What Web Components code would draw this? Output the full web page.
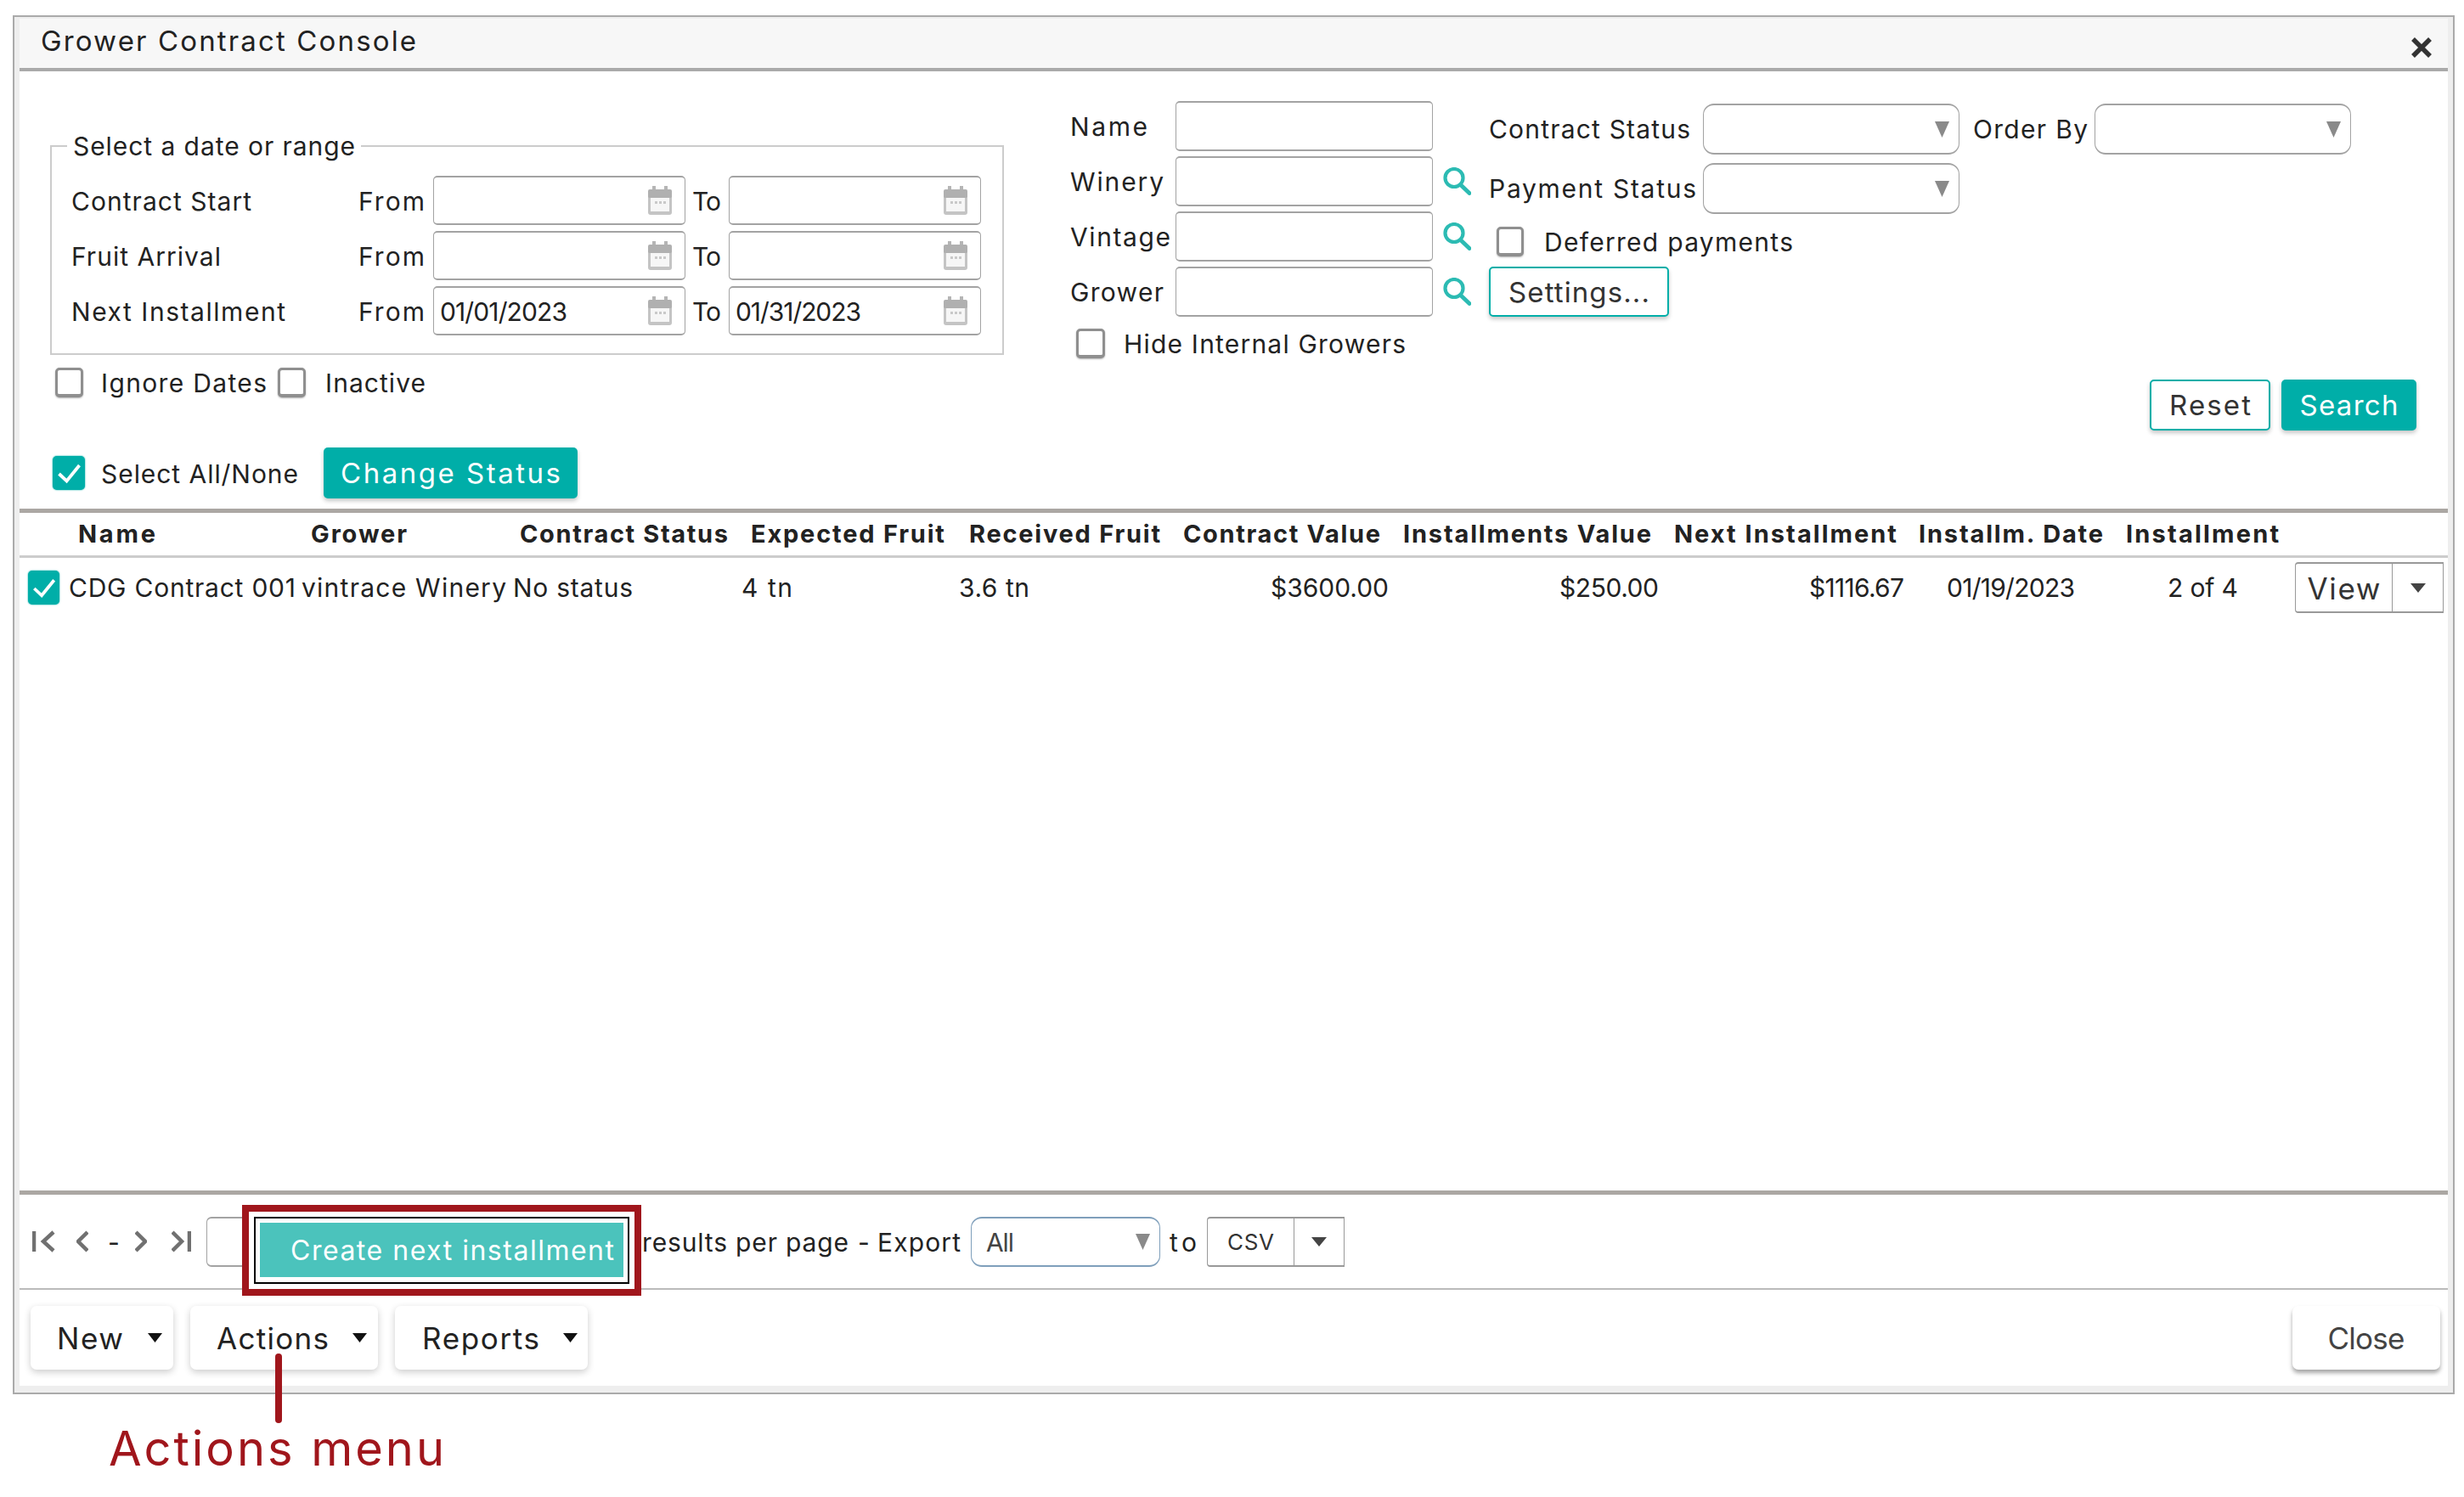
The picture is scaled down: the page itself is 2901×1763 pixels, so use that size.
<!DOCTYPE html>
<html lang="en"><head><meta charset="utf-8"><title>Grower Contract Console</title>
<style>
html,body{margin:0;background:#fff}
body{position:relative;width:2901px;height:1763px;overflow:hidden;padding:18px 0 0 15px;box-sizing:border-box;font:30px/1.2 Inter,"Liberation Sans",sans-serif;color:#222}
</style></head><body>
<gc-window></gc-window>
<gc-callout></gc-callout>
<script>
const T=(w,s,extra='')=>`<gc-t w="${w}" ${extra}>${s}</gc-t>`;
const ARROW=(w,h,c)=>`<svg width="${w}" height="${h}" viewBox="0 0 ${w} ${h}" style="display:block;flex:none"><path d="M0 0H${w}L${w/2} ${h}Z" fill="${c}"/></svg>`;

class GcBase extends HTMLElement{
  constructor(){super();this.attachShadow({mode:'open'});}
  connectedCallback(){if(!this.done){this.done=1;this.shadowRoot.innerHTML=`<style>${this.css()}</style>${this.html()}`;}}
  css(){return':host{display:block}'}
  html(){return'<slot></slot>'}
  a(n,d){return this.hasAttribute(n)?this.getAttribute(n):d}
}
/* text whose run is fitted to the width of the original font */
class GcT extends HTMLElement{
  constructor(){super();this.attachShadow({mode:'open'}).innerHTML='<style>:host{display:inline-block;white-space:nowrap;flex:none;padding-top:1.5px}</style><slot></slot>';}
  connectedCallback(){
    const w=+this.getAttribute('w');if(!w)return;
    const len=this.textContent.length;
    if(len<2){this.style.width=w+'px';this.style.textAlign='center';return;}
    this.style.letterSpacing='0px';
    const cur=this.getBoundingClientRect().width;
    const ls=(w-cur)/(len-1);
    this.style.letterSpacing=ls+'px';
    this.style.marginRight=(-ls)+'px';
  }
}
customElements.define('gc-t',GcT);

customElements.define('gc-date',class extends GcBase{
  css(){return`:host{display:flex;align-items:center;box-sizing:border-box;width:297px;height:58px;border:solid #a3a3a3;border-width:2px 1.5px;border-radius:5px;padding:0 14px 0 7px;background:#fff;justify-content:space-between}`}
  html(){return`<span>${this.a('value')?T(this.a('w'),this.a('value')):''}</span>
  <svg width="30" height="36" viewBox="0 0 30 36"><path d="M6 1h4v5H6zM20 1h4v5h-4z" fill="#b5b5b5"/><rect x="1" y="5" width="28" height="11" rx="2" fill="#b0b0b0"/><path d="M1 15h28v17a3 3 0 0 1-3 3H4a3 3 0 0 1-3-3z" fill="#c4c4c4"/><rect x="4" y="15" width="22" height="16" fill="#f6f6f6"/><path d="M9 19h3v3H9zM14 19h3v3h-3zM19 19h3v3h-3z" fill="#c9c9c9"/></svg>`}
});
customElements.define('gc-input',class extends GcBase{
  css(){return`:host{display:block;box-sizing:border-box;width:303px;height:59px;border:solid #a3a3a3;border-width:2px 1.5px;border-radius:5px;background:#fff}`}
  html(){return''}
});
customElements.define('gc-glass',class extends GcBase{
  css(){return':host{display:block;width:33px;height:33px}'}
  html(){return`<svg width="33" height="33" viewBox="0 0 33 33" style="display:block"><circle cx="13" cy="12.500" r="10.500" fill="none" stroke="#2cbbb3" stroke-width="4.200"/><path d="M20.500 20.500L31 30.500" stroke="#2cbbb3" stroke-width="4.800" stroke-linecap="round"/></svg>`}
});
customElements.define('gc-check',class extends GcBase{
  css(){const c=this.hasAttribute('checked');return`:host{display:block;flex:none;box-sizing:border-box;width:${this.a('bw',33)}px;height:${this.a('bh',35)}px;border-radius:5px;${c?'background:#00aea8;box-shadow:0 0 2px #00aea8':'border:3.5px solid #8f8f8f;border-bottom-width:4.5px;background:#fff;box-shadow:0 1px 2px rgba(0,0,0,.3)'}}`}
  html(){return this.hasAttribute('checked')?`<svg width="100%" height="100%" viewBox="0 0 38 40" style="display:block"><path d="M7.500 21l9 8.500L31.500 11" fill="none" stroke="#fff" stroke-width="3.800"/></svg>`:''}
});
customElements.define('gc-select',class extends GcBase{
  css(){return`:host{display:flex;align-items:center;justify-content:space-between;box-sizing:border-box;width:${this.a('width',302)}px;height:${this.a('height',60)}px;border:solid ${this.a('color','#a3a3a3')};border-width:2.500px 1.500px;border-radius:13px;padding:0 11px 0 17px;background:#fff;color:#444}`}
  html(){return`<span><slot></slot></span>${ARROW(17,19,'#8a8a8a')}`}
});
customElements.define('gc-btn',class extends GcBase{
  css(){const s=this.hasAttribute('solid');return`:host{display:flex;align-items:center;justify-content:center;flex:none;box-sizing:border-box;height:${this.a('height',60)}px;width:${this.a('width')}px;border-radius:5px;font-size:33px;box-shadow:0 3px 5px rgba(0,0,0,.22);${s?'background:#00aea8;color:#fff':'background:#fff;border:2.500px solid #00aea8;color:#333'}}`}
});
customElements.define('gc-split',class extends GcBase{
  css(){return`:host{display:flex;flex:none;box-sizing:border-box;width:${this.a('width')}px;height:${this.a('height',60)}px;border:solid #999;border-width:2.500px 1.500px;border-radius:4px 0 0 4px;background:#fff}
  .l{display:flex;align-items:center;justify-content:center;width:${this.a('lw')}px;border-right:1.500px solid #999;margin:0;box-sizing:border-box;font-size:${this.a('fs',35)}px;color:#333}
  .r{flex:1;display:flex;align-items:center;justify-content:center}`}
  html(){return`<div class="l"><slot></slot></div><div class="r">${ARROW(18,11,'#444')}</div>`}
});
customElements.define('gc-menu',class extends GcBase{
  css(){return`:host{display:flex;align-items:center;flex:none;box-sizing:border-box;height:75px;width:${this.a('width')}px;padding-left:${this.a('pl',31)}px;border-radius:7px;background:#fff;box-shadow:0 3px 9px rgba(0,0,0,.2);font-size:35px}
  svg{margin-left:${this.a('gap',29)}px}`}
  html(){return`<slot></slot>${ARROW(17,11,'#111')}`}
});

customElements.define('gc-date-panel',class extends GcBase{
  css(){return`:host{display:block;flex:none;width:1123px;box-sizing:border-box;margin-left:36px;padding-top:68px}
  fieldset{margin:0;padding:15px 24px 21px 23px;border:2.500px solid #ccc;box-sizing:border-box;width:1123px;min-width:0}
  legend{margin-left:-5px;padding:0 7px;line-height:37px;height:40px}
  .rows{display:grid;grid-template-columns:338px 88px 297px 51px 297px;row-gap:7px;align-items:center}
  .to{padding-left:8px}
  .chk{display:flex;align-items:center;height:35px;margin:15px 0 0 6px}`}
  html(){
    const row=(n,w,a,aw,b,bw)=>`<div>${T(w,n)}</div><div>${T(78,'From')}</div><gc-date value="${a}" w="${aw}"></gc-date><div class="to">${T(34,'To')}</div><gc-date value="${b}" w="${bw}"></gc-date>`;
    return`<fieldset><legend>${T(332,'Select a date or range')}</legend><div class="rows">
    ${row('Contract Start',212,'',0,'',0)}${row('Fruit Arrival',176,'',0,'',0)}${row('Next Installment',252,'01/01/2023',150,'01/31/2023',148)}
    </div></fieldset>
    <div class="chk"><gc-check></gc-check><span style="margin-left:21px">${T(195,'Ignore Dates')}</span><gc-check style="margin-left:13px"></gc-check><span style="margin-left:23px">${T(118,'Inactive')}</span></div>`}
});
customElements.define('gc-name-panel',class extends GcBase{
  css(){return`:host{display:block;flex:none;margin-left:78px;width:472px;padding-top:35px}
  .rows{display:grid;grid-template-columns:124px 303px 45px;row-gap:6px;align-items:center}
  gc-glass{margin-left:12px}
  .hide{display:flex;align-items:center;height:35px;margin:14px 0 0 7px}`}
  html(){const r=(n,w,g)=>`<div>${T(w,n)}</div><gc-input></gc-input>${g?'<gc-glass></gc-glass>':'<span></span>'}`;
  return`<div class="rows">${r('Name',91,0)}${r('Winery',110,1)}${r('Vintage',118,1)}${r('Grower',110,1)}</div>
  <div class="hide"><gc-check bw="34"></gc-check><span style="margin-left:22px">${T(332,'Hide Internal Growers')}</span></div>`}
});
customElements.define('gc-filter-panel',class extends GcBase{
  css(){return`:host{display:block;flex:none;margin-left:21px;width:1092px;padding-top:38px}
  .row{display:flex;align-items:center}
  .l{width:252px;flex:none;padding-bottom:2px}
  .o{width:143px;flex:none;margin-left:16px;padding-bottom:2px}
  .def{height:35px;margin:15px 0 0 9px}
  .act{display:flex;justify-content:flex-end;gap:13px;margin-top:74px}`}
  html(){return`<div class="row"><div class="l">${T(237,'Contract Status')}</div><gc-select></gc-select><div class="o">${T(135,'Order By')}</div><gc-select></gc-select></div>
  <div class="row" style="margin-top:10px"><div class="l">${T(244,'Payment Status')}</div><gc-select></gc-select></div>
  <div class="row def"><gc-check bw="32"></gc-check><span style="margin-left:24px">${T(293,'Deferred payments')}</span></div>
  <gc-btn width="212" height="59" style="margin-top:12px;padding-top:2px">${T(166,'Settings...')}</gc-btn>
  <div class="act"><gc-btn width="142">${T(96,'Reset')}</gc-btn><gc-btn solid width="159">${T(116,'Search')}</gc-btn></div>`}
});
customElements.define('gc-grid',class extends GcBase{
  css(){return`:host{display:block;flex:none;border-top:5px solid #aba7a3}
  .g{display:grid;grid-template-columns:329px 248px 270px 257px 253px 260px 318px 289px 243px 205px 1fr}
  .h{height:50px;align-items:center;font-weight:700;border-bottom:3px solid #ccc;font-size:29px}
  .b{height:70px;align-items:center}
  .b>.t{padding-bottom:2px}
  .r{text-align:right;padding-right:5px}
  .n{display:flex;align-items:center;padding-left:10px}`}
  html(){
    const hs=[[91,'Name',69],[113,'Grower',14],[245,'Contract Status',12],[228,'Expected Fruit',14],[225,'Received Fruit',14],[232,'Contract Value',13],[292,'Installments Value',12],[262,'Next Installment',13],[217,'Installm. Date',12],[180,'Installment',13]];
    return`<div class="g h">${hs.map(h=>`<div style="padding-left:${h[2]}px">${T(h[0],h[1])}</div>`).join('')}<div></div></div>
    <div class="g b">
      <div class="n"><gc-check checked bw="37" bh="40"></gc-check><span style="margin-left:11px;padding-bottom:2px;display:block">${T(267,'CDG Contract 001')}</span></div>
      <div class="t" style="padding-left:3px">${T(241,'vintrace Winery')}</div>
      <div class="t" style="padding-left:4px">${T(141,'No status')}</div>
      <div class="t" style="padding-left:3px">${T(60,'4 tn')}</div>
      <div class="t" style="padding-left:2px">${T(83,'3.6 tn')}</div>
      <div class="t r">${T(139,'$3600.00')}</div>
      <div class="t r">${T(117,'$250.00')}</div>
      <div class="t r">${T(112,'$1116.67')}</div>
      <div class="t" style="padding-left:45px">${T(151,'01/19/2023')}</div>
      <div class="t" style="padding-left:62px">${T(83,'2 of 4')}</div>
      <div style="padding-left:7px"><gc-split width="175" lw="114">${T(86,'View')}</gc-split></div>
    </div>`}
});
customElements.define('gc-pager',class extends GcBase{
  css(){return`:host{display:flex;flex:none;align-items:center;height:110px;border-top:5px solid #aba7a3;padding-left:15px}
  svg{display:block;flex:none}
  path{fill:none;stroke:#707070;stroke-width:4.500}
  .page{margin-left:18px;width:500px;height:59px;box-sizing:border-box;border:solid #a3a3a3;border-width:2px 1.500px;border-radius:6px;flex:none}`}
  html(){return`
  <svg width="27" height="26" viewBox="0 0 27 26"><path d="M2 1v24M25 2L13 13l12 11"/></svg>
  <svg width="14" height="26" viewBox="0 0 14 26" style="margin-left:25px"><path d="M13 2L2 13l11 11"/></svg>
  <span style="margin-left:23px">${T(9,'-')}</span>
  <svg width="14" height="26" viewBox="0 0 14 26" style="margin-left:23px"><path d="M1 2l11 11L1 24"/></svg>
  <svg width="23" height="26" viewBox="0 0 23 26" style="margin-left:29px"><path d="M1 2l11 11L1 24M21 1v24"/></svg>
  <div class="page"></div>
  <span style="margin-left:13px">${T(243,'results per page')}</span>
  <span style="margin-left:11px">${T(9,'-')}</span>
  <span style="margin-left:14px">${T(98,'Export')}</span>
  <gc-select width="223" height="59" color="#7f9fbb" style="margin-left:12px">${T(33,'All')}</gc-select>
  <span style="margin-left:11px">${T(32,'to')}</span>
  <gc-split width="162" lw="102" height="59" fs="26" style="margin-left:12px">${T(55,'CSV')}</gc-split>`}
});
customElements.define('gc-footer',class extends GcBase{
  css(){return`:host{display:flex;gap:20px;border-top:2px solid #bbb;padding:19px 9px 0 13px;flex:none;height:115px;box-sizing:border-box}
  .close{margin-left:auto;box-sizing:border-box;width:174px;height:75px;display:flex;align-items:center;justify-content:center;border-radius:7px;background:#fff;color:#444;font-size:35px;box-shadow:0 4px 5px rgba(0,0,0,.35)}`}
  html(){return`<gc-menu width="168">${T(78,'New')}</gc-menu><gc-menu width="221" gap="28">${T(132,'Actions')}</gc-menu><gc-menu width="227" pl="32" gap="28">${T(138,'Reports')}</gc-menu><div class="close">${T(91,'Close')}</div>`}
});
customElements.define('gc-window',class extends GcBase{
  css(){return`:host{display:flex;flex-direction:column;box-sizing:border-box;width:2875px;height:1624px;border:2px solid #aaa;padding:2px 6px 8px;background:#eee}
  .title{display:flex;justify-content:space-between;box-sizing:border-box;height:62px;padding:0 18px 5px 25px;background:#f7f7f7;border-bottom:4px solid #aaa;font-size:33px;align-items:center;flex:none}
  .title svg{display:block;margin-top:15px}
  .main{flex:1;display:flex;flex-direction:column;background:#fff;min-height:0}
  .form{display:flex;align-items:flex-start;margin-bottom:20px;flex:none}
  .sel{display:flex;align-items:center;height:60px;padding-left:39px;margin-bottom:12px;flex:none}
  .sp{flex:1}`}
  html(){return`<div class="title">${T(442,'Grower Contract Console')}<svg width="26" height="26" viewBox="0 0 26 26"><path d="M3 3l20 20M23 3L3 23" stroke="#333" stroke-width="5.500"/></svg></div>
  <div class="main">
    <div class="form"><gc-date-panel></gc-date-panel><gc-name-panel></gc-name-panel><gc-filter-panel></gc-filter-panel></div>
    <div class="sel"><gc-check checked bw="38" bh="40"></gc-check><span style="margin-left:19px">${T(232,'Select All/None')}</span><gc-btn solid width="299" style="margin-left:30px">${T(259,'Change Status')}</gc-btn></div>
    <gc-grid></gc-grid>
    <div class="sp"></div>
    <gc-pager></gc-pager>
    <gc-footer></gc-footer>
  </div>`}
});
customElements.define('gc-callout',class extends GcBase{
  css(){return`:host{position:absolute;inset:0;display:block;pointer-events:none}
  .red{position:absolute;left:285px;top:1419px;box-sizing:border-box;width:470px;height:107px;border:8px solid #a0161c;background:#fff;padding:6px}
  .blk{box-sizing:border-box;height:79px;border:2px solid #000;padding:5px;background:#fff}
  .tl{height:64px;background:#4bc3bc;color:#fff;display:flex;align-items:center;padding-left:36px;font-size:32px}
  .line{position:absolute;left:324px;top:1594px;width:8px;height:82px;border-radius:4px;background:#a0161c}
  .txt{position:absolute;left:128px;top:1670px;line-height:68px;font-size:56px;color:#a0161c}`}
  html(){return`<div class="red"><div class="blk"><div class="tl">${T(381,'Create next installment')}</div></div></div><div class="line"></div><div class="txt">${T(395,'Actions menu')}</div>`}
});
</script>
</body></html>
